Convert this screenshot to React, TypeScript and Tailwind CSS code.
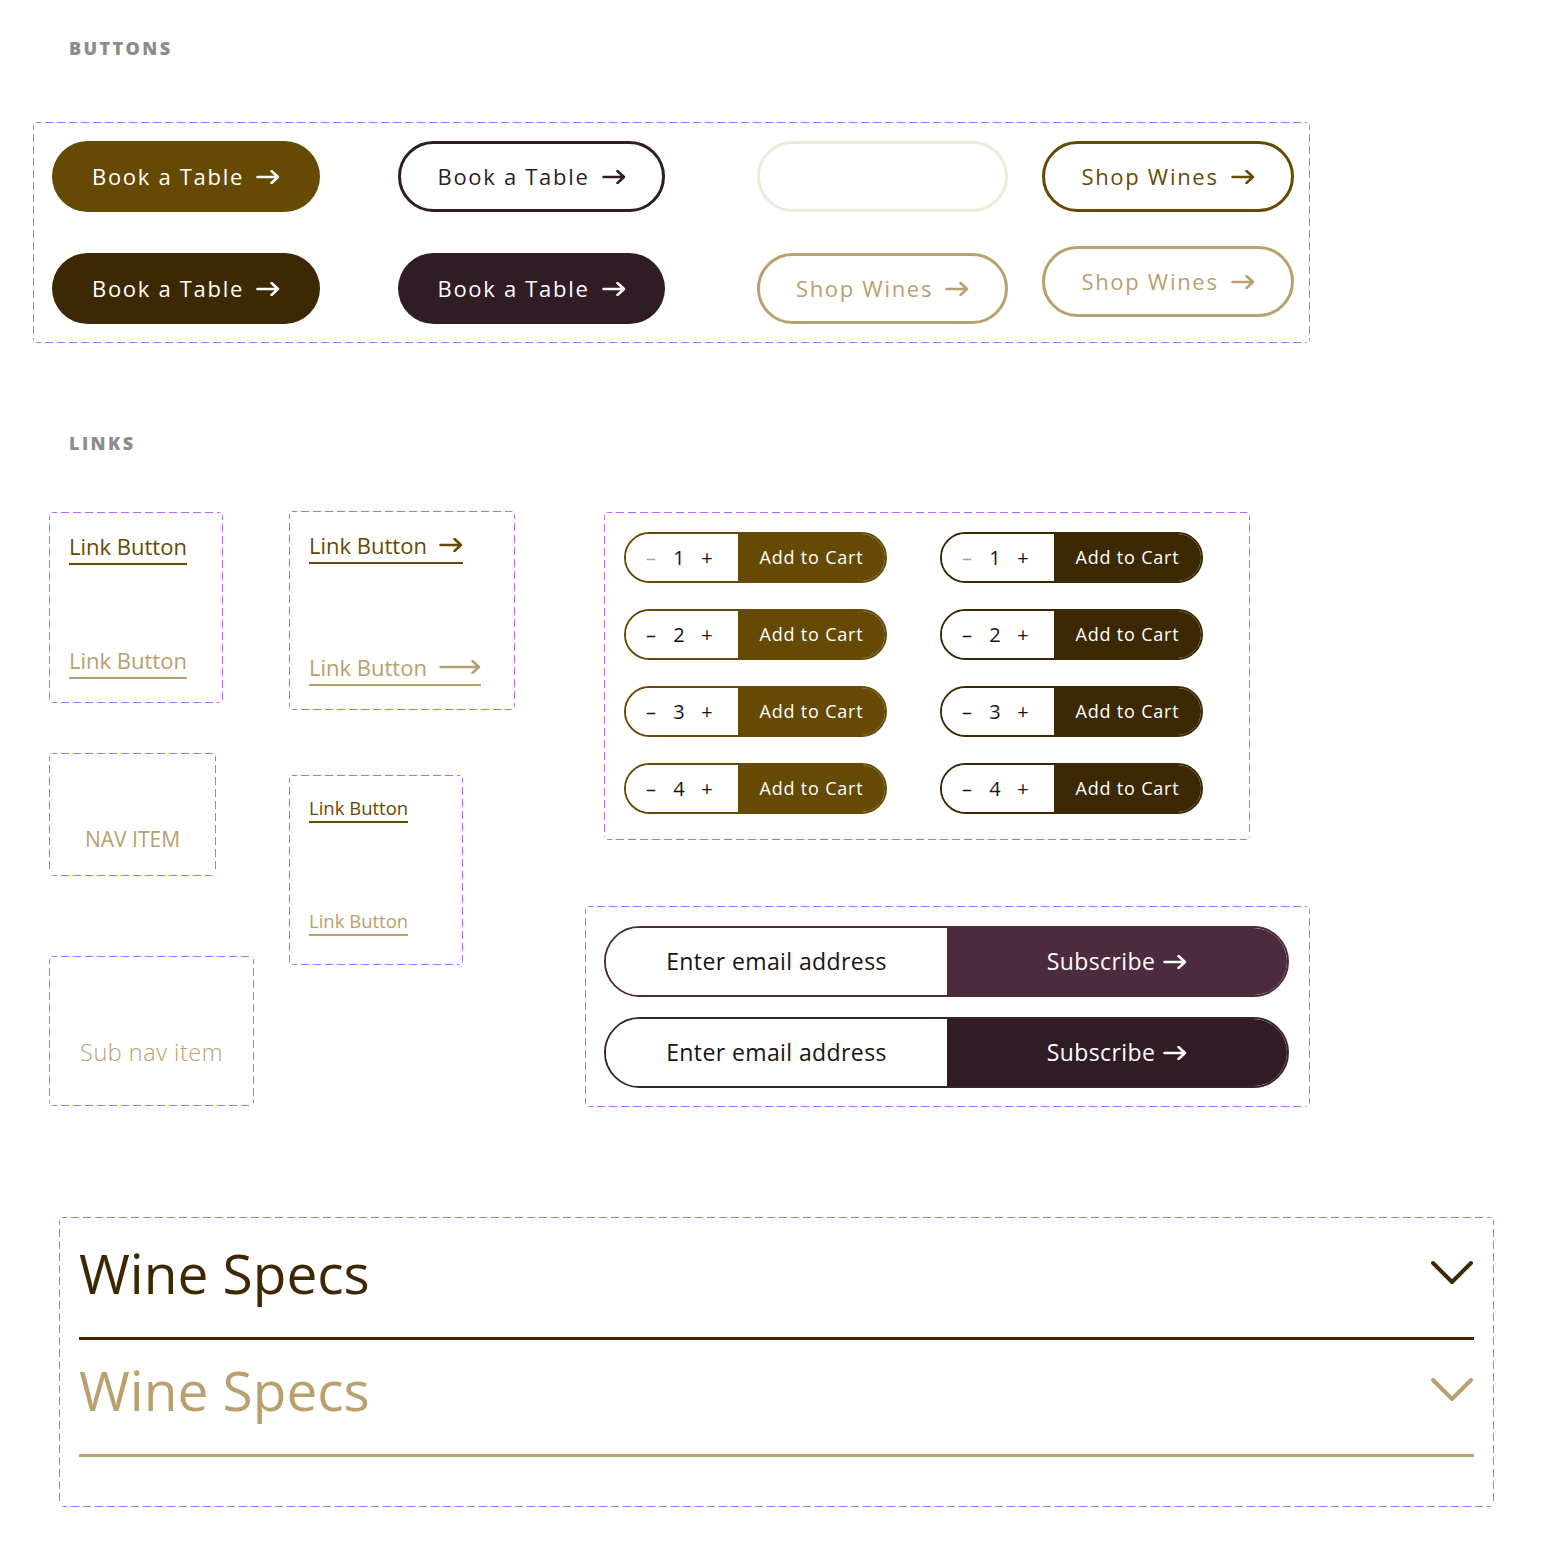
import React from "react";

// dashed frame like the design tool's component-set outline (8px dash, 4px gap)
const DASH =
  "rounded-[5px] [background:linear-gradient(to_right,#b266ff_0_8px,transparent_8px_12px)_top_left/12px_1px_repeat-x,linear-gradient(to_right,#b266ff_0_8px,transparent_8px_12px)_bottom_left/12px_1px_repeat-x,linear-gradient(to_bottom,#b266ff_0_8px,transparent_8px_12px)_top_left/1px_12px_repeat-y,linear-gradient(to_bottom,#b266ff_0_8px,transparent_8px_12px)_top_right/1px_12px_repeat-y]";

function Arrow({ w = 24, className = "" }: { w?: number; className?: string }) {
  return (
    <svg
      width={w}
      height="14"
      viewBox={`0 0 ${w} 14`}
      fill="none"
      stroke="currentColor"
      strokeWidth="2.5"
      strokeLinecap="round"
      strokeLinejoin="round"
      className={className}
    >
      <path d={`M1.5 7H${w - 2}M${w - 8.5} 1l6.5 6-6.5 6`} />
    </svg>
  );
}

function Chevron({ className = "" }: { className?: string }) {
  return (
    <svg width="44" height="26" viewBox="0 0 44 26" fill="none" stroke="currentColor" strokeWidth="4" strokeLinecap="round" strokeLinejoin="round" className={className}>
      <path d="M3 3l19 19L41 3" />
    </svg>
  );
}

function Pill({ label, className }: { label?: string; className: string }) {
  return (
    <div className={"flex h-[71px] items-center justify-center gap-[12px] rounded-full text-[22px] font-medium tracking-[1.7px] " + className}>
      {label && <span>{label}</span>}
      {label && <Arrow />}
    </div>
  );
}

function Cart({ n, dark, muted }: { n: number; dark: boolean; muted?: boolean }) {
  return (
    <div className={"flex h-[51px] w-[263px] overflow-hidden rounded-full border-2 " + (dark ? "border-[#3c2904]" : "border-[#664a04]")}>
      <div className="flex w-[112px] items-center gap-[8px] bg-white pl-[15px] text-[20px] font-medium text-[#141414]">
        <span className={"w-[20px] text-center " + (muted ? "text-[#a3a3a3]" : "")}>–</span>
        <span className="w-[20px] text-center">{n}</span>
        <span className="w-[20px] text-center">+</span>
      </div>
      <div className={"flex flex-1 items-center justify-center text-[18px] font-medium tracking-[0.8px] text-white " + (dark ? "bg-[#3c2904]" : "bg-[#664a04]")}>
        Add to Cart
      </div>
    </div>
  );
}

function Subscribe({ bg, border }: { bg: string; border: string }) {
  return (
    <div className={"flex h-[71px] w-[685px] overflow-hidden rounded-full border-2 " + border}>
      <div className="flex w-[341px] items-center justify-center bg-white text-[23px] tracking-[0.4px] text-[#141414]">
        Enter email address
      </div>
      <div className={"flex flex-1 items-center justify-center gap-[8px] text-[23px] font-medium tracking-[0.4px] text-white " + bg}>
        <span>Subscribe</span>
        <Arrow />
      </div>
    </div>
  );
}

export default function App() {
  return (
    <div className="min-h-[1546px] w-[1550px] bg-white pt-[36px] font-['Open_Sans',sans-serif]">
      <h2 className="ml-[69px] text-[18px] leading-[24px] font-extrabold tracking-[2.4px] text-[#8c8c8c]">BUTTONS</h2>

      <div className={"ml-[33px] mt-[62px] flex h-[221px] w-[1277px] pl-[19px] pt-[19px] " + DASH}>
        <div className="flex w-[268px] flex-col gap-[41px]">
          <Pill label="Book a Table" className="bg-[#664a04] text-white" />
          <Pill label="Book a Table" className="bg-[#3c2904] text-white" />
        </div>
        <div className="ml-[78px] flex w-[267px] flex-col gap-[41px]">
          <Pill label="Book a Table" className="border-[3px] border-[#2f1c25] text-[#2f1c25]" />
          <Pill label="Book a Table" className="bg-[#2f1c25] text-white" />
        </div>
        <div className="ml-[92px] flex w-[251px] flex-col gap-[41px]">
          <Pill className="border-[3px] border-[#efe9dc]" />
          <Pill label="Shop Wines" className="border-[3px] border-[#b9a06e] text-[#b9a06e]" />
        </div>
        <div className="ml-[34px] flex w-[252px] flex-col gap-[34px]">
          <Pill label="Shop Wines" className="border-[3px] border-[#664a04] text-[#664a04]" />
          <Pill label="Shop Wines" className="border-[3px] border-[#b9a06e] text-[#b9a06e]" />
        </div>
      </div>

      <h2 className="ml-[69px] mt-[88px] text-[18px] leading-[24px] font-extrabold tracking-[2.4px] text-[#8c8c8c]">LINKS</h2>

      <div className="mt-[56px] flex items-start">
        {/* column 1 */}
        <div className="ml-[49px] flex w-[240px] flex-col items-start">
          <div className={"mt-[1px] flex h-[191px] w-[174px] flex-col items-start pl-[20px] pt-[19px] " + DASH}>
            <span className="border-b-2 border-[#664a04] pb-[2px] text-[22px] leading-[30px] text-[#664a04]">Link Button</span>
            <span className="mt-[80px] border-b-2 border-[#b9a06e] pb-[2px] text-[22px] leading-[30px] text-[#b9a06e]">Link Button</span>
          </div>
          <div className={"mt-[50px] flex h-[123px] w-[167px] justify-center pt-[71px] " + DASH}>
            <span className="text-[21px] leading-[30px] font-medium text-[#b9a06e]">NAV ITEM</span>
          </div>
          <div className={"mt-[80px] flex h-[150px] w-[205px] justify-center pt-[81px] " + DASH}>
            <span className="text-[23.5px] leading-[30px] font-light tracking-[0.5px] text-[#b9a06e]">Sub nav item</span>
          </div>
        </div>

        {/* column 2 */}
        <div className="flex w-[296px] flex-col items-start">
          <div className={"flex h-[199px] w-[226px] flex-col items-start pl-[20px] pt-[19px] " + DASH}>
            <span className="flex items-center gap-[12px] border-b-2 border-[#664a04] pb-[2px] text-[22px] leading-[30px] text-[#664a04]">
              Link Button
              <Arrow />
            </span>
            <span className="mt-[88px] flex items-center gap-[12px] border-b-2 border-[#b9a06e] pb-[2px] text-[22px] leading-[30px] text-[#b9a06e]">
              Link Button
              <Arrow w={42} />
            </span>
          </div>
          <div className={"mt-[65px] flex h-[190px] w-[174px] flex-col items-start pl-[20px] pt-[20px] " + DASH}>
            <span className="border-b-2 border-[#664a04] text-[18.5px] leading-[26px] font-medium text-[#664a04]">Link Button</span>
            <span className="mt-[85px] border-b-2 border-[#b9a06e] text-[18.5px] leading-[26px] font-medium text-[#b9a06e]">Link Button</span>
          </div>
        </div>

        {/* column 3 */}
        <div className="flex flex-col items-start">
          <div className={"ml-[19px] mt-[1px] flex h-[328px] w-[646px] gap-[53px] pl-[20px] pt-[20px] " + DASH}>
            <div className="flex flex-col gap-[26px]">
              <Cart n={1} dark={false} muted />
              <Cart n={2} dark={false} />
              <Cart n={3} dark={false} />
              <Cart n={4} dark={false} />
            </div>
            <div className="flex flex-col gap-[26px]">
              <Cart n={1} dark muted />
              <Cart n={2} dark />
              <Cart n={3} dark />
              <Cart n={4} dark />
            </div>
          </div>
          <div className={"mt-[66px] flex h-[201px] w-[725px] flex-col gap-[20px] pl-[19px] pt-[20px] " + DASH}>
            <Subscribe bg="bg-[#4b2b3d]" border="border-[#4b2b3d]" />
            <Subscribe bg="bg-[#2f1c25]" border="border-[#3a2430]" />
          </div>
        </div>
      </div>

      {/* accordion */}
      <div className={"ml-[59px] mt-[110px] h-[290px] w-[1435px] px-[20px] pt-[16px] " + DASH}>
        <div className="flex h-[80px] items-center justify-between text-[#3c2904]">
          <span className="text-[55px] leading-[70px]">Wine Specs</span>
          <Chevron />
        </div>
        <div className="mt-[24px] h-[3px] bg-[#3c2904]" />
        <div className="mt-[10px] flex h-[80px] items-center justify-between text-[#b9a06e]">
          <span className="text-[55px] leading-[70px]">Wine Specs</span>
          <Chevron />
        </div>
        <div className="mt-[24px] h-[3px] bg-[#b9a06e]" />
      </div>
    </div>
  );
}
